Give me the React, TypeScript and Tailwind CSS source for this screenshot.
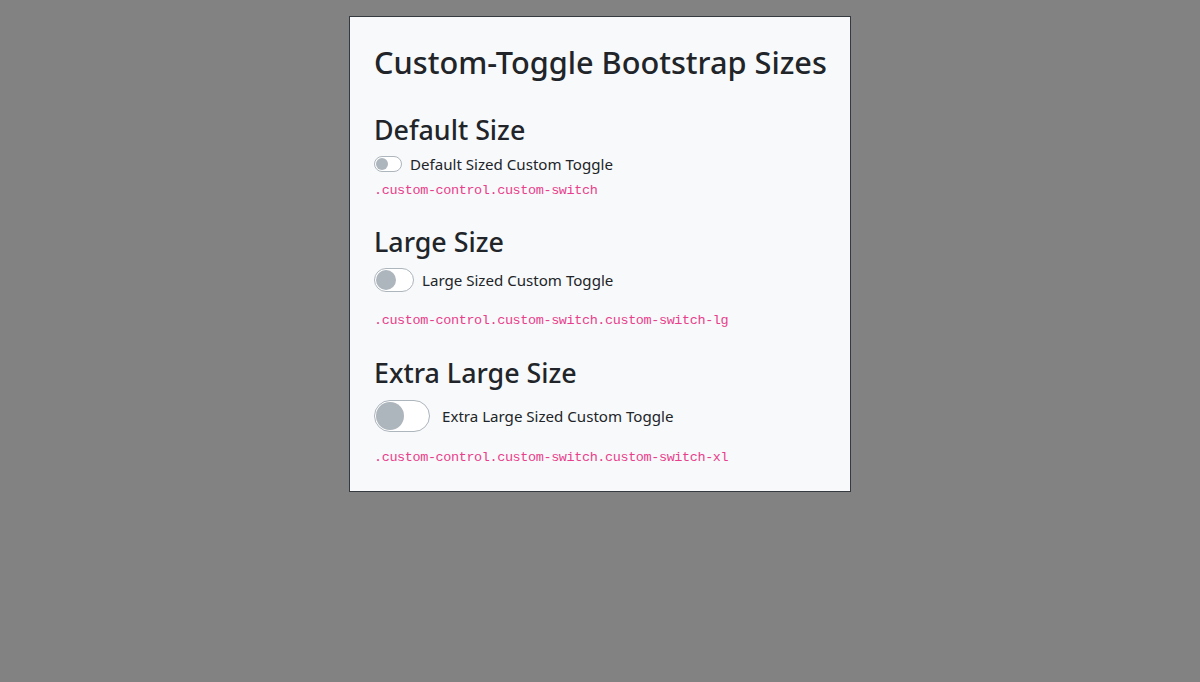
import React from "react";

type Size = "default" | "lg" | "xl";

// Track / thumb dimensions for each switch size
const trackClass: Record<Size, string> = {
  default: "w-[28px] h-[16px]",
  lg: "w-[40px] h-[24px]",
  xl: "w-[56px] h-[32px]",
};

const thumbClass: Record<Size, string> = {
  default: "w-[12px] h-[12px]",
  lg: "w-[20px] h-[20px]",
  xl: "w-[28px] h-[28px]",
};

function Switch({ size, label, id }: { size: Size; label: string; id: string }) {
  const gap = size === "xl" ? "gap-3" : "gap-2";
  return (
    <label htmlFor={id} className={`flex items-center ${gap} cursor-pointer select-none`}>
      <input id={id} type="checkbox" className="sr-only" />
      <span
        className={`${trackClass[size]} shrink-0 rounded-full border border-[#adb5bd] bg-white flex items-center px-[1px]`}
      >
        <span className={`${thumbClass[size]} rounded-full bg-[#adb5bd]`} />
      </span>
      <span className="text-[15.1px] leading-[24px]">{label}</span>
    </label>
  );
}

function Code({ children, className = "" }: { children: string; className?: string }) {
  return (
    <code
      className={`block text-[#e83e8c] text-[13.5px] leading-[21px] tracking-[-0.4px] ${className}`}
      style={{ fontFamily: '"Liberation Mono", "DejaVu Sans Mono", monospace' }}
    >
      {children}
    </code>
  );
}

export default function App() {
  return (
    <div
      className="min-h-[682px] w-full bg-[#828282] pt-[16px] text-[#212529]"
      style={{ fontFamily: '"Noto Sans", "Open Sans", sans-serif' }}
    >
      <div className="mx-auto w-[502px] border border-[#343a40] bg-[#f8f9fa] px-6 pt-[26px] pb-[23px]">
        <h2 className="text-[30.7px] leading-[38.4px] font-medium mb-8 whitespace-nowrap">
          Custom-Toggle Bootstrap Sizes
        </h2>

        <section>
          <h3 className="text-[26.8px] leading-[33.6px] font-medium mb-[5px]">Default Size</h3>
          <Switch size="default" id="sw-default" label="Default Sized Custom Toggle" />
          <Code className="mt-[4px]">.custom-control.custom-switch</Code>
        </section>

        <section className="mt-[24px]">
          <h3 className="text-[26.8px] leading-[33.6px] font-medium mb-2">Large Size</h3>
          <div className="pt-[1px]">
            <Switch size="lg" id="sw-lg" label="Large Sized Custom Toggle" />
          </div>
          <Code className="mt-[18px]">.custom-control.custom-switch.custom-switch-lg</Code>
        </section>

        <section className="mt-[25px]">
          <h3 className="text-[26.8px] leading-[33.6px] font-medium mb-2">Extra Large Size</h3>
          <div className="pt-[3px]">
            <Switch size="xl" id="sw-xl" label="Extra Large Sized Custom Toggle" />
          </div>
          <Code className="mt-[15px]">.custom-control.custom-switch.custom-switch-xl</Code>
        </section>
      </div>
    </div>
  );
}
